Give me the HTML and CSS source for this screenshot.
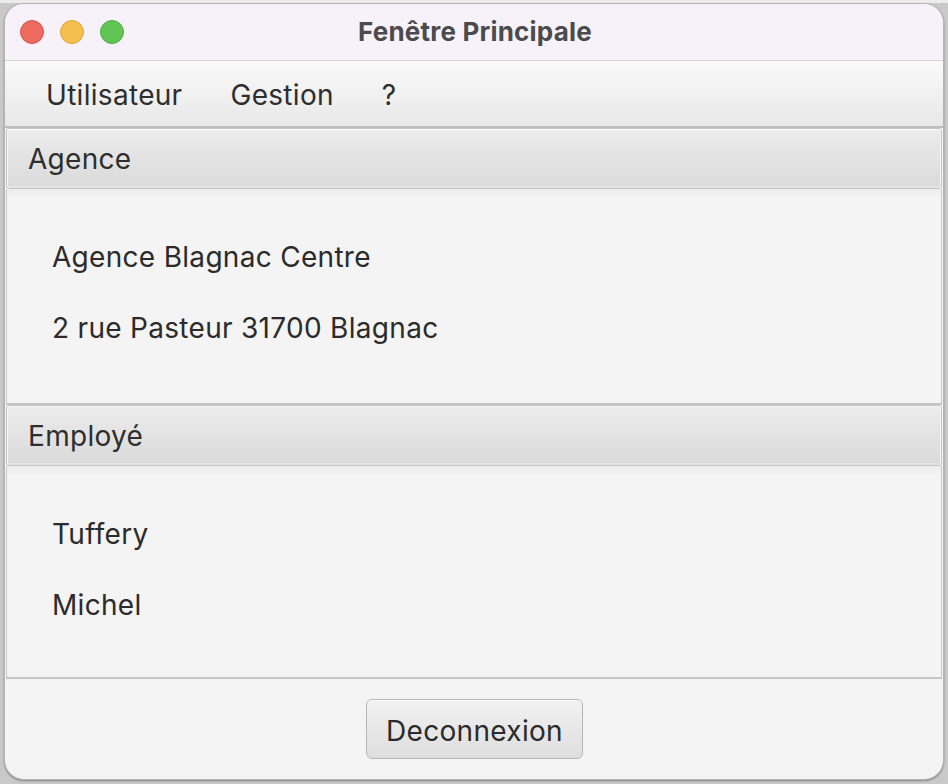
FILE: index.html
```html
<!DOCTYPE html>
<html lang="fr">
<head>
<meta charset="utf-8">
<title>Fenêtre Principale</title>
<link rel="stylesheet" href="styles.css">
</head>
<body>
<div class="window">
  <div class="titlebar">
    <div class="lights">
      <span class="light red"></span>
      <span class="light yellow"></span>
      <span class="light green"></span>
    </div>
    <div class="title">Fenêtre Principale</div>
  </div>
  <div class="menubar">
    <span class="menu">Utilisateur</span>
    <span class="menu">Gestion</span>
    <span class="menu">?</span>
  </div>
  <div class="panes">
    <section class="pane">
      <div class="pane-header">Agence</div>
      <div class="pane-content">
        <div class="line">Agence Blagnac Centre</div>
        <div class="line">2 rue Pasteur 31700 Blagnac</div>
      </div>
    </section>
    <section class="pane">
      <div class="pane-header">Employé</div>
      <div class="pane-content">
        <div class="line">Tuffery</div>
        <div class="line">Michel</div>
      </div>
    </section>
  </div>
  <div class="footer">
    <button class="btn">Deconnexion</button>
  </div>
</div>
</body>
</html>
```

FILE: styles.css
```css
html, body {
  margin: 0;
  padding: 0;
}
body {
  width: 948px;
  height: 784px;
  overflow: hidden;
  background: linear-gradient(#ececec 0, #ececec 3px, #c9c9c9 3px);
  font-family: Inter, "Noto Sans", sans-serif;
  color: #333333;
}
.window {
  margin: 3px 0 0 4px;
  width: 940px;
  height: 777px;
  box-sizing: border-box;
  border: 1px solid #b4b4b4;
  border-radius: 20px;
  overflow: hidden;
  background: #f4f4f4;
  display: flex;
  flex-direction: column;
  box-shadow: 0 1px 2px rgba(0,0,0,0.35);
}
.titlebar {
  height: 56px;
  flex: none;
  background: #f7f2fa;
  border-bottom: 1px solid #d6d4d8;
  display: flex;
  align-items: center;
  position: relative;
}
.lights {
  display: flex;
  gap: 16px;
  padding-left: 15px;
}
.light {
  width: 24px;
  height: 24px;
  border-radius: 50%;
  box-sizing: border-box;
}
.red { background: #ed6a5e; border: 1px solid #d8564a; }
.yellow { background: #f5bf4f; border: 1px solid #dca33a; }
.green { background: #61c554; border: 1px solid #4ead42; }
.title {
  position: absolute;
  left: 0;
  right: 0;
  top: 0;
  bottom: 2px;
  display: flex;
  align-items: center;
  justify-content: center;
  font-weight: 700;
  font-size: 26px;
  letter-spacing: 0.2px;
  color: #4b4a4d;
  padding-left: 2px;
}
.menubar {
  height: 67px;
  flex: none;
  box-sizing: border-box;
  background: linear-gradient(#fafafa, #e8e8e8);
  border-bottom: 2px solid #bebebe;
  display: flex;
  align-items: center;
  padding: 3px 0 0 41px;
  gap: 48px;
  font-size: 28px;
  letter-spacing: 0.3px;
}
.menu {
  color: #2e2e2e;
}
.panes {
  flex: none;
  padding: 0 1px;
}
.pane-header {
  height: 61px;
  box-sizing: border-box;
  border: 1px solid #c4c4c4;
  border-radius: 3px;
  background: linear-gradient(#ececec, #dadada);
  box-shadow: inset 0 1px 0 #fbfbfb, inset 1px 0 0 #f6f6f6, inset -1px 0 0 #f6f6f6, inset 0 -2px 0 #e4e4e4;
  display: flex;
  align-items: center;
  padding: 1px 0 0 21px;
  font-size: 28px;
  letter-spacing: 0.3px;
  color: #2e2e2e;
}
.pane-content {
  height: 216px;
  box-sizing: border-box;
  border-left: 1px solid #c8c8c8;
  border-right: 1px solid #c8c8c8;
  border-bottom: 2px solid #c6c6c6;
  background: linear-gradient(#ececec 0, #f4f4f4 10px);
  padding: 50px 0 0 45px;
  display: flex;
  flex-direction: column;
  gap: 35px;
}
.pane:last-child .pane-content {
  height: 213px;
}
.line {
  height: 36px;
  line-height: 36px;
  font-size: 28px;
  letter-spacing: 0.3px;
  color: #2b2b2b;
}
.footer {
  flex: 1;
  display: flex;
  align-items: flex-start;
  justify-content: center;
  padding-top: 20px;
  padding-left: 1px;
}
.btn {
  width: 217px;
  height: 60px;
  border: 1px solid #b6b6b6;
  border-radius: 6px;
  background: linear-gradient(#f2f2f2, #dedede);
  box-shadow: inset 0 1px 0 #fdfdfd;
  font-family: Inter, "Noto Sans", sans-serif;
  font-size: 28px;
  letter-spacing: 0.3px;
  color: #2b2b2b;
  padding: 3px 0 0 0;
}
```
